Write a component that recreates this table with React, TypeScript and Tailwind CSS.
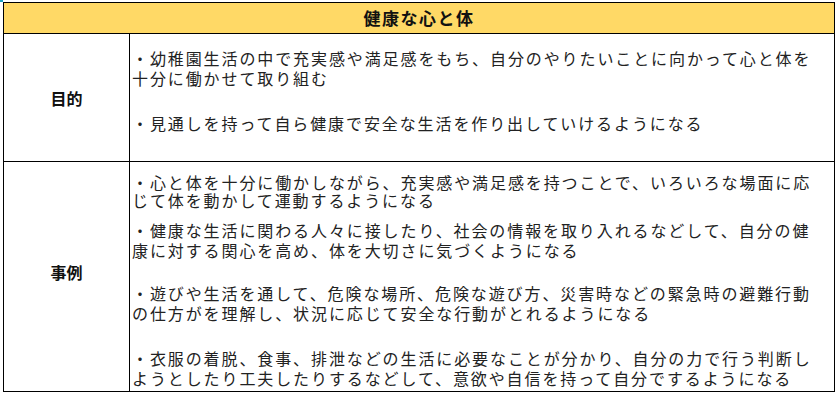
const FONT = '"Noto Sans CJK JP", "Noto Sans", sans-serif'

type Para = { lines: string[]; className: string }

const PURPOSE: Para[] = [
  {
    lines: [
      '・幼稚園生活の中で充実感や満足感をもち、自分のやりたいことに向かって心と体を',
      '十分に働かせて取り組む',
    ],
    className: 'mt-[14px]',
  },
  {
    lines: ['・見通しを持って自ら健康で安全な生活を作り出していけるようになる'],
    className: 'mt-[25px]',
  },
]

const EXAMPLES: Para[] = [
  {
    lines: [
      '・心と体を十分に働かしながら、充実感や満足感を持つことで、いろいろな場面に応',
      'じて体を動かして運動するようになる',
    ],
    className: 'mt-[11px] leading-[18px]',
  },
  {
    lines: [
      '・健康な生活に関わる人々に接したり、社会の情報を取り入れるなどして、自分の健',
      '康に対する関心を高め、体を大切さに気づくようになる',
    ],
    className: 'mt-[11px]',
  },
  {
    lines: [
      '・遊びや生活を通して、危険な場所、危険な遊び方、災害時などの緊急時の避難行動',
      'の仕方がを理解し、状況に応じて安全な行動がとれるようになる',
    ],
    className: 'mt-[23px]',
  },
  {
    lines: [
      '・衣服の着脱、食事、排泄などの生活に必要なことが分かり、自分の力で行う判断し',
      'ようとしたり工夫したりするなどして、意欲や自信を持って自分でするようになる',
    ],
    className: 'mt-[25px]',
  },
]

const Paragraphs = ({ items }: { items: Para[] }) => (
  <div className="flex flex-col pl-[2px] text-[16px] leading-[20px] tracking-[1.9px] text-[#222]">
    {items.map((p, i) => (
      <div key={i} className={p.className}>
        {p.lines.map((line) => (
          <div key={line} className="whitespace-nowrap">
            {line}
          </div>
        ))}
      </div>
    ))}
  </div>
)

const Row = ({
  label,
  items,
  height,
  labelPad = '',
  last,
}: {
  label: string
  items: Para[]
  height: string
  labelPad?: string
  last?: boolean
}) => (
  <div
    className={`grid grid-cols-[126px_1fr] ${height} ${last ? '' : 'border-b border-black'}`}
  >
    <div
      className={`flex items-center justify-center border-r border-black text-[16px] font-bold text-[#111] ${labelPad}`}
    >
      {label}
    </div>
    <Paragraphs items={items} />
  </div>
)

export default function App() {
  return (
    <div
      className="relative h-[402px] w-[838px] bg-white pl-[3px] pt-[2px]"
      style={{ fontFamily: FONT }}
    >
      <div className="absolute left-0 top-0 h-[2px] w-[3px] bg-[#1ba1c4]" />
      <div className="w-[832px] border border-black">
        <div className="flex h-[31px] items-center justify-center border-b border-black bg-[#ffd966] text-[17px] font-bold tracking-[1.5px] text-[#111]">
          健康な心と体
        </div>
        <Row label="目的" items={PURPOSE} height="h-[128px]" />
        <Row
          label="事例"
          items={EXAMPLES}
          height="h-[229px]"
          labelPad="pb-[10px]"
          last
        />
      </div>
    </div>
  )
}
